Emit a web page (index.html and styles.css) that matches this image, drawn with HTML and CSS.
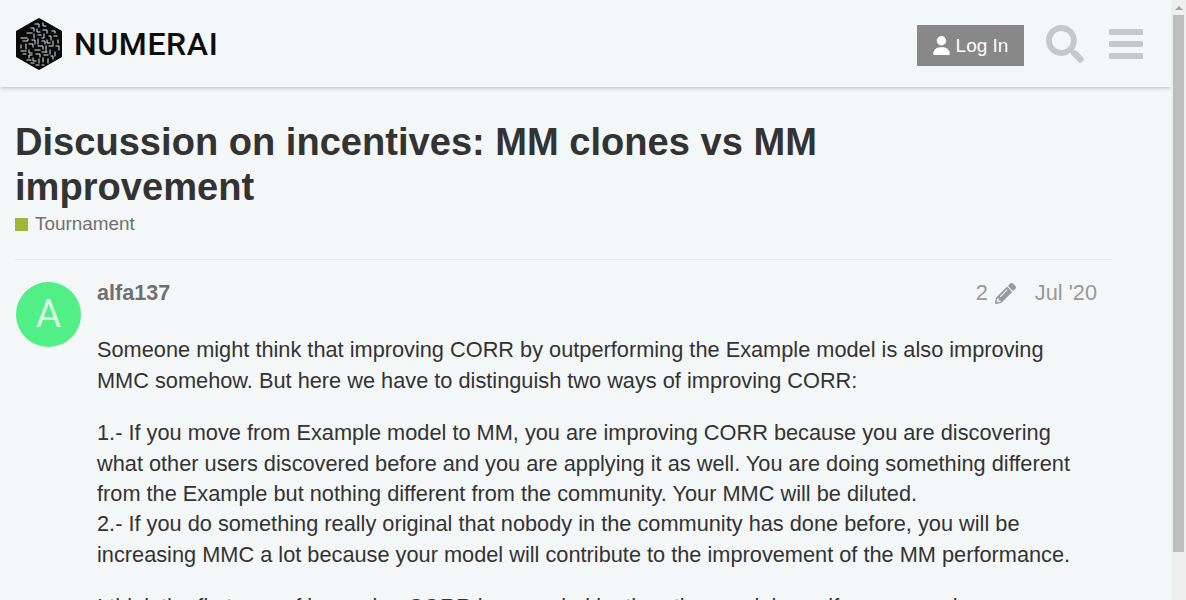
FILE: index.html
```html
<!DOCTYPE html>
<html lang="en">
<head>
<meta charset="utf-8">
<title>Discussion on incentives: MM clones vs MM improvement</title>
<link rel="stylesheet" href="styles.css">
</head>
<body>
<div class="window">
  <div class="page">
    <header class="site-header">
      <a class="logo">
        <svg class="logo-mark" viewBox="0 0 46 52" width="46" height="52" aria-hidden="true">
          <polygon points="23,0 25,1 46,13 46,39 25,51 23,52 21,51 0,39 0,13 21,1" fill="#0a0a0a"/>
          <g fill="none" stroke="#dfe4e6" stroke-width="1" stroke-linecap="square">
            <path d="M19 6h4v3M27 5v3h3M15 10h3v3M21 11v3h3M27 12h4v3M36 13h3v2M11 15h5M18 16v4M22 17h3M28 16v4h-2M33 18h2v4M38 18h3"/>
            <path d="M5 20h6M7 23h5v-2M16 22h3v4M22 21v5M26 23h3v3M31 22v3h3M37 23v4M42 22v3"/>
            <path d="M5 27v3M10 26v5M13 26h4v3M22 28h5v3M30 28v5M33 28h4M40 28h3v4"/>
            <path d="M5 33h5M7 36h3M13 32v3h3M19 32h5M26 34h5M34 32v4M39 34v4M16 37h-3v3M20 36h4v3M28 37h4M35 38h2v3"/>
            <path d="M11 42h4M17 40v3h3M23 41v4M27 40v4M32 41v4M15 45h3M20 47h3M26 47h2"/>
          </g>
        </svg>
        <span class="logo-text">NUMERAI</span>
      </a>
      <div class="header-tools">
        <button class="login">
          <svg viewBox="0 0 448 512" width="17" height="19" fill="#fff" aria-hidden="true"><path d="M224 256A128 128 0 1 0 224 0a128 128 0 1 0 0 256zm-45.700 48C79.800 304 0 383.800 0 482.300 0 498.700 13.300 512 29.700 512h388.600c16.400 0 29.700-13.300 29.700-29.700C448 383.800 368.200 304 269.700 304h-91.400z"/></svg>
          <span>Log In</span>
        </button>
        <svg class="search" viewBox="0 0 512 512" width="38" height="38" fill="#c6c8c9" aria-hidden="true"><path d="M505 442.700L405.300 343c-4.500-4.500-10.600-7-17-7H372c27.600-35.300 44-79.700 44-128C416 93.100 322.900 0 208 0S0 93.100 0 208s93.100 208 208 208c48.300 0 92.700-16.400 128-44v16.300c0 6.400 2.500 12.500 7 17l99.700 99.700c9.400 9.400 24.600 9.400 33.900 0l28.300-28.300c9.400-9.400 9.400-24.600.1-34zM208 336c-70.700 0-128-57.200-128-128 0-70.700 57.200-128 128-128 70.700 0 128 57.200 128 128 0 70.700-57.200 128-128 128z"/></svg>
        <div class="hamburger"><i></i><i></i><i></i></div>
      </div>
    </header>

    <main class="content">
      <h1 class="topic-title">Discussion on incentives: MM clones vs MM improvement</h1>
      <div class="category"><span class="swatch"></span><span>Tournament</span></div>
      <article class="post">
        <div class="avatar">A</div>
        <div class="post-body">
          <div class="post-meta">
            <span class="username">alfa137</span>
            <span class="post-info">
              <span class="edits">2
                <svg viewBox="0 0 512 512" width="21" height="21" fill="#999" aria-hidden="true"><path d="M497.900 142.100l-46.100 46.100c-4.700 4.700-12.300 4.700-17 0l-111-111c-4.700-4.700-4.700-12.300 0-17l46.100-46.100c18.700-18.700 49.100-18.700 67.900 0l60.100 60.100c18.800 18.700 18.800 49.100 0 67.900zM284.200 99.800L21.600 362.400.4 483.900c-2.900 16.400 11.400 30.600 27.800 27.800l121.500-21.300 262.600-262.600c4.700-4.700 4.700-12.300 0-17l-111-111c-4.800-4.700-12.400-4.700-17.100 0zM124.100 339.900c-5.500-5.500-5.500-14.300 0-19.800l154-154c5.500-5.500 14.300-5.500 19.800 0s5.500 14.300 0 19.800l-154 154c-5.500 5.500-14.300 5.500-19.800 0zM88 424h48v36.300l-64.500 11.300-31.100-31.100L51.700 376H88v48z"/></svg>
              </span>
              <span class="date">Jul '20</span>
            </span>
          </div>
          <div class="cooked">
            <p>Someone might think that improving CORR by outperforming the Example model is also improving MMC somehow. But here we have to distinguish two ways of improving CORR:</p>
            <p>1.- If you move from Example model to MM, you are improving CORR because you are discovering what other users discovered before and you are applying it as well. You are doing something different from the Example but nothing different from the community. Your MMC will be diluted.<br>2.- If you do something really original that nobody in the community has done before, you will be increasing MMC a lot because your model will contribute to the improvement of the MM performance.</p>
            <p>I think the first way of improving CORR is rewarded by the other models, as if someone else</p>
          </div>
        </div>
      </article>
    </main>
  </div>
  <div class="scrollbar" aria-hidden="true">
    <div class="scroll-arrow"></div>
    <div class="scroll-thumb"></div>
  </div>
</div>
</body>
</html>
```
FILE: styles.css
```css
html, body { margin: 0; padding: 0; height: 100%; overflow: hidden; }
body { background: #f4f7f8; color: #2b2b2b; font-family: "Liberation Sans", Arial, sans-serif; }
.window { display: flex; width: 1186px; height: 600px; overflow: hidden; }
.page { width: 1171px; flex: none; height: 600px; overflow: hidden; }
.site-header { height: 87px; box-sizing: border-box; display: flex; align-items: center; justify-content: space-between; padding: 0 28px 0 16px; background: #f4f7f8; box-shadow: 0 2px 4px -1px rgba(0,0,0,.25); position: relative; }
.logo { display: flex; align-items: center; gap: 12px; }
.logo-mark { display: block; }
.logo-text { font-family: Roboto, "Liberation Sans", sans-serif; font-size: 32px; font-weight: 500; letter-spacing: .6px; color: #0d0d0d; }
.header-tools { display: flex; align-items: center; }
.login { height: 41px; width: 107px; display: flex; align-items: center; justify-content: center; gap: 6px; background: #888; color: #fff; border: 0; padding: 0; font: 400 19px "Liberation Sans", Arial, sans-serif; margin-top: 4px; }
.search { margin-left: 22px; }
.hamburger { display: flex; flex-direction: column; gap: 6px; margin-left: 25px; width: 34px; }
.hamburger i { display: block; height: 6px; border-radius: 1.5px; background: #c6c8c9; }
.content { padding: 0 59px 0 15px; }
.topic-title { margin: 33px 0 0; max-width: 900px; font-size: 38.08px; line-height: 45px; font-weight: 700; color: #333; }
.category { display: flex; align-items: center; gap: 7px; font-size: 18.9px; line-height: 28px; color: #707070; }
.swatch { width: 13px; height: 13px; background: #a0b53c; }
.post { display: flex; margin-top: 21px; padding-top: 22px; border-top: 1px solid #e7eaec; }
.avatar { flex: none; width: 65px; height: 65px; margin-left: 1px; border-radius: 50%; background: #51ef86; color: #d9f9e4; font-family: Roboto, sans-serif; font-size: 39px; line-height: 64px; text-align: center; }
.post-body { flex: 1; margin-left: 16px; min-width: 0; }
.post-meta { display: flex; justify-content: space-between; align-items: center; height: 24px; margin-top: -1px; padding-right: 15px; }
.username { font-size: 21.6px; font-weight: 700; color: #707070; }
.post-info { display: flex; align-items: center; gap: 19px; font-size: 21.76px; color: #999; }
.edits { display: flex; align-items: center; gap: 7px; }
.cooked { margin-top: 30.4px; padding-right: 20px; font-size: 21.76px; line-height: 1.4; color: #333; }
.cooked p { margin: 0 0 1em; }
.scrollbar { width: 15px; flex: none; background: #efefef; box-sizing: border-box; padding: 0 2px; }
.scroll-arrow { height: 15px; position: relative; }
.scroll-arrow::after { content: ""; position: absolute; left: 2px; top: 6px; border: 4px solid transparent; border-top: 0; border-bottom: 4px solid #a3a3a3; }
.scroll-thumb { height: 537px; background: #bdbdbd; }
```
